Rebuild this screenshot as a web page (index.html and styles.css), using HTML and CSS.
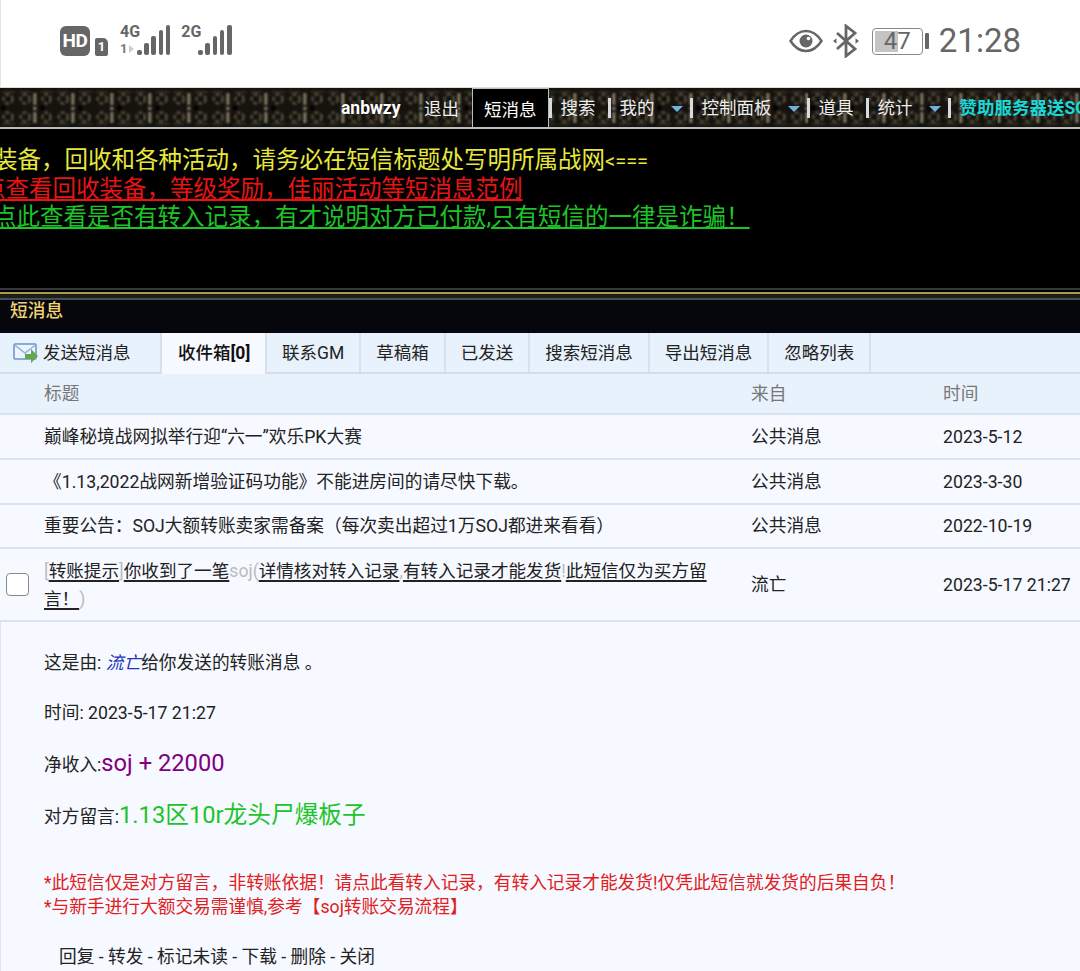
FILE: index.html
```html
<!DOCTYPE html>
<html lang="zh-CN">
<head>
    <meta charset="UTF-8">
    <meta name="viewport" content="width=device-width, initial-scale=1.0">
    <title>短消息</title>
    <link rel="stylesheet" href="styles.css">
</head>
<body>
    <div class="status-bar">
        <div class="status-left">
            <span class="hd-badge">HD</span>
            <span class="sim-badge">1</span>
            <div class="signal">
                <div class="net-label"><span>4G</span><span class="net-sub">1<i class="net-arrow"></i></span></div>
                <div class="bars"><i class="bar-1"></i><i class="bar-2"></i><i class="bar-3"></i><i class="bar-4"></i><i class="bar-5"></i></div>
            </div>
            <div class="signal">
                <div class="net-label"><span>2G</span></div>
                <div class="bars"><i class="bar-1"></i><i class="bar-2"></i><i class="bar-3"></i><i class="bar-4"></i><i class="bar-5"></i></div>
            </div>
        </div>
        <div class="status-right">
            <svg class="eye-icon" width="34" height="24" viewBox="0 0 34 24">
                <path d="M1.500 12C6 5 11 2 17 2s11 3 15.500 10C28 19 23 22 17 22S6 19 1.500 12z" fill="none" stroke="#666" stroke-width="2.500"/>
                <circle cx="17" cy="12" r="6.500" fill="#666"/>
                <circle cx="19.500" cy="9.500" r="1.800" fill="#fff"/>
            </svg>
            <svg class="bt-icon" width="26" height="34" viewBox="0 0 26 34">
                <path d="M4 9l18 16-9 7V2l9 7L4 25" fill="none" stroke="#666" stroke-width="2.800"/>
                <path d="M0 17l3.500-2.800v5.600zM26 17l-3.500-2.800v5.600z" fill="#666"/>
            </svg>
            <div class="battery">
                <div class="battery-body"><div class="battery-fill"></div><span class="battery-num">47</span></div>
                <div class="battery-cap"></div>
            </div>
            <span class="clock">21:28</span>
        </div>
    </div>

    <nav class="top-nav">
        <span class="nav-user">anbwzy</span>
        <span class="nav-item nav-logout">退出</span>
        <span class="nav-item nav-active">短消息</span>
        <span class="nav-item nav-sep">搜索</span>
        <span class="nav-item nav-sep">我的<i class="nav-caret"></i></span>
        <span class="nav-item nav-sep">控制面板<i class="nav-caret"></i></span>
        <span class="nav-item nav-sep">道具</span>
        <span class="nav-item nav-sep">统计<i class="nav-caret"></i></span>
        <span class="nav-item nav-sep nav-promo">赞助服务器送SOJ</span>
    </nav>

    <div class="notice">
        <p class="notice-yellow">装备，回收和各种活动，请务必在短信标题处写明所属战网<span class="arrow">&lt;===</span></p>
        <p class="notice-red">点查看回收装备，等级奖励，佳丽活动等短消息范例</p>
        <p class="notice-green">点此查看是否有转入记录，有才说明对方已付款,只有短信的一律是诈骗！</p>
    </div>

    <div class="gold-rule"></div>
    <div class="section-title">短消息</div>

    <div class="tabs">
        <div class="tab tab-send">
            <svg width="26" height="23" viewBox="0 0 26 23">
                <rect x="1" y="2" width="22" height="15" rx="1" fill="#eef4fc" stroke="#6f93c8" stroke-width="1.500"/>
                <path d="M1.500 3l10.500 8 10.500-8" fill="none" stroke="#8fb0dc" stroke-width="1.500"/>
                <path d="M12 12h6V7l7 7-7 7v-4h-6z" fill="#62a84e"/>
            </svg>
            发送短消息
        </div>
        <div class="tab tab-active">收件箱<b>[0]</b></div>
        <div class="tab">联系GM</div>
        <div class="tab">草稿箱</div>
        <div class="tab">已发送</div>
        <div class="tab">搜索短消息</div>
        <div class="tab">导出短消息</div>
        <div class="tab">忽略列表</div>
    </div>

    <div class="msg-row msg-head">
        <span class="col-title">标题</span>
        <span>来自</span>
        <span>时间</span>
    </div>
    <div class="msg-row">
        <span class="col-title">巅峰秘境战网拟举行迎“六一”欢乐PK大赛</span>
        <span>公共消息</span>
        <span>2023-5-12</span>
    </div>
    <div class="msg-row">
        <span class="col-title">《1.13,2022战网新增验证码功能》不能进房间的请尽快下载。</span>
        <span>公共消息</span>
        <span>2023-3-30</span>
    </div>
    <div class="msg-row msg-short">
        <span class="col-title">重要公告：SOJ大额转账卖家需备案（每次卖出超过1万SOJ都进来看看）</span>
        <span>公共消息</span>
        <span>2022-10-19</span>
    </div>
    <div class="msg-row msg-open">
        <span class="msg-check"></span>
        <span class="col-title"><span class="faint">[</span><u>转账提示</u><span class="faint">]</span><u>你收到了一笔</u><span class="faint">soj(</span><u>详情核对转入记录</u><span class="faint">,</span><u>有转入记录才能发货</u><span class="faint">!</span><u>此短信仅为买方留言！</u><span class="faint">)</span></span>
        <span>流亡</span>
        <span>2023-5-17 21:27</span>
    </div>

    <div class="msg-body">
        <p class="line-from">这是由: <a class="sender">流亡</a>给你发送的转账消息 。</p>
        <p class="line-time">时间: 2023-5-17 21:27</p>
        <p class="line-income">净收入:<span class="income">soj + 22000</span></p>
        <p class="line-note">对方留言:<span class="note">1.13区10r龙头尸爆板子</span></p>
        <p class="warn">*此短信仅是对方留言，非转账依据！请点此看转入记录，有转入记录才能发货!仅凭此短信就发货的后果自负！<br>*与新手进行大额交易需谨慎,参考【soj转账交易流程】</p>
        <p class="actions">回复 - 转发 - 标记未读 - 下载 - 删除 - 关闭</p>
    </div>
</body>
</html>
```

FILE: styles.css
```css
* {
    margin: 0;
    padding: 0;
    box-sizing: border-box;
}

html, body {
    height: 971px;
    overflow: hidden;
}

body {
    width: 1080px;
    font-family: 'Roboto', 'Noto Sans CJK SC', sans-serif;
    font-size: 17.700px;
    color: #222;
    background: #f6f9ff;
}

/* phone status bar */
.status-bar {
    height: 87px;
    background: #fff;
    border-left: 1px solid #e6e6e6;
    display: flex;
    justify-content: space-between;
    align-items: flex-start;
    padding: 24px 59px 0 59px;
    color: #666;
}

.status-left {
    display: flex;
    align-items: flex-start;
}

.hd-badge {
    width: 30px;
    height: 30px;
    margin-top: 2px;
    background: #666;
    border-radius: 6px;
    color: #fff;
    font: bold 19px/30px 'Roboto', sans-serif;
    letter-spacing: -0.5px;
    text-align: center;
}

.sim-badge {
    width: 13px;
    height: 18px;
    margin: 14px 0 0 5px;
    background: #666;
    border-radius: 2px 5px 2px 2px;
    color: #fff;
    font: bold 13px/18px 'Roboto', sans-serif;
    text-align: center;
}

.signal {
    display: flex;
    margin-left: 12px;
    align-items: flex-end;
    height: 31px;
}

.signal + .signal {
    margin-left: 11px;
}

.net-label {
    width: 17px;
    height: 31px;
    display: flex;
    flex-direction: column;
    justify-content: space-between;
    font: bold 16px/15px 'Liberation Sans Narrow', 'Roboto', sans-serif;
}

.net-sub {
    display: flex;
    align-items: center;
    font-size: 13px;
    line-height: 10px;
    margin-bottom: 1px;
    color: #777;
}

.net-arrow {
    width: 0;
    height: 0;
    margin-left: 2px;
    border-left: 5px solid #ccc;
    border-top: 4px solid transparent;
    border-bottom: 4px solid transparent;
}

.bars {
    display: flex;
    align-items: flex-end;
    gap: 2.700px;
}

.bars i {
    display: block;
    width: 4.500px;
    background: #666;
    border-radius: 2px;
}

.bar-1 { height: 5px; }
.bar-2 { height: 12px; }
.bar-3 { height: 19px; }
.bar-4 { height: 25px; }
.bar-5 { height: 30px; }

.status-right {
    display: flex;
    align-items: center;
    height: 34px;
}

.bt-icon {
    margin-left: 10px;
}

.battery {
    display: flex;
    align-items: center;
    margin-left: 13px;
}

.battery-body {
    position: relative;
    width: 51px;
    height: 27px;
    border: 1.500px solid #888;
    border-radius: 4px;
    padding: 2px;
}

.battery-fill {
    width: 23px;
    height: 100%;
    background: #c4c4c4;
}

.battery-num {
    position: absolute;
    top: 0;
    left: 0;
    right: 0;
    text-align: center;
    font: 24px/24px 'Roboto', sans-serif;
    color: #666;
}

.battery-cap {
    width: 4px;
    height: 16px;
    margin-left: 2px;
    background: #666;
    border-radius: 1px;
}

.clock {
    margin-left: 10px;
    font: 33px/38px 'Roboto', sans-serif;
    color: #666;
}

/* top nav with the stone texture */
.top-nav {
    height: 42px;
    display: flex;
    align-items: center;
    padding-left: 341px;
    font-size: 17.500px;
    white-space: nowrap;
    overflow: hidden;
    color: #eee;
    border-top: 1px solid #ddd;
    border-bottom: 2px solid #b9bcc0;
    background-color: #15130e;
    background-image: url("data:image/svg+xml,%3Csvg xmlns='http://www.w3.org/2000/svg' width='38.600' height='39'%3E%3Cdefs%3E%3Cfilter id='b'%3E%3CfeGaussianBlur stdDeviation='1'/%3E%3C/filter%3E%3C/defs%3E%3Cg filter='url(%23b)'%3E%3Cg fill='none' stroke='%2358503f' stroke-width='2.400' stroke-dasharray='4 2'%3E%3Ccircle cx='8' cy='10' r='4.500'/%3E%3Ccircle cx='8' cy='28' r='4.500'/%3E%3Ccircle cx='25' cy='10' r='4.500'/%3E%3Ccircle cx='25' cy='28' r='4.500'/%3E%3C/g%3E%3Cpath d='M2 3h13M2 35h13M19 3h11M19 35h11' stroke='%23332e23' stroke-width='2'/%3E%3Cpath d='M0 19l5-4v8z' fill='%23030302'/%3E%3Crect x='33' y='4' width='3' height='12' fill='%23857c66'/%3E%3Crect x='33' y='18' width='3' height='3' fill='%23948b74'/%3E%3Crect x='33' y='23' width='3' height='11' fill='%23857c66'/%3E%3C/g%3E%3C/svg%3E");
    background-position: 0 1px;
}

.nav-user {
    flex-shrink: 0;
    font-weight: bold;
    color: #fff;
    width: 83px;
}

.nav-item {
    display: block;
    flex-shrink: 0;
}

.nav-logout {
    width: 48px;
}

.nav-active {
    align-self: flex-end;
    height: 41px;
    margin-bottom: -2px;
    padding: 0 11px;
    line-height: 42px;
    background: #000;
    color: #fff;
    border: 1px solid #b9bcc0;
    border-bottom: none;
}

.nav-sep {
    padding-left: 9px;
    margin-right: 12px;
    border-left: 3px solid #d8dade;
    line-height: 20px;
    height: 20px;
}

.nav-caret {
    display: inline-block;
    width: 0;
    height: 0;
    margin: 0 -5px 2px 16px;
    border-left: 6px solid transparent;
    border-right: 6px solid transparent;
    border-top: 6px solid #6fb3dc;
}

.nav-promo {
    color: #19d8d8;
    font-weight: bold;
    margin-right: 0;
}

/* black notice block */
.notice {
    height: 159px;
    background: #000;
    padding-top: 17px;
    font-size: 23.500px;
    line-height: 28px;
    white-space: nowrap;
    overflow: hidden;
}

.notice-yellow {
    color: #e8e83a;
    margin-left: -6px;
}

.arrow {
    font-size: 20px;
}

.notice-red {
    color: #e81414;
    text-decoration: underline;
    margin-left: -18px;
}

.notice-green {
    color: #1cc428;
    text-decoration: underline;
    margin-left: -7px;
}

.gold-rule {
    height: 13px;
    background: linear-gradient(#34373e 0 2px, #000 2px 4px, #a89a4a 4px 6px, #1e1e18 6px 10px, #464d5a 10px 12px, #05070c 12px);
}

.section-title {
    height: 32px;
    background: #05070c;
    color: #f1d476;
    font-weight: 500;
    padding-left: 10px;
    line-height: 20px;
}

/* tabs */
.tabs {
    height: 41px;
    display: flex;
    font-size: 17.500px;
    background: #e8f2fc;
    border-bottom: 2px solid #d3deea;
}

.tab {
    height: 39px;
    padding: 0 15px;
    line-height: 41px;
    border-right: 2px solid #d6e1ec;
    white-space: nowrap;
}

.tab-send {
    display: flex;
    align-items: center;
    width: 162px;
    padding: 2px 15px 0 13px;
}

.tab-send svg {
    margin-right: 4px;
}

.tab-active {
    width: 105px;
    background: #f6f9ff;
    height: 41px;
    padding-left: 16px;
    font-weight: 500;
    color: #111;
}

/* message table */
.msg-row {
    display: grid;
    grid-template-columns: 751px 192px 1fr;
    align-items: center;
    height: 45px;
    line-height: 24px;
    border-bottom: 2px solid #d9e2ee;
    position: relative;
}

.msg-row .col-title {
    padding-left: 44px;
}

.msg-head {
    height: 41px;
    padding-top: 1px;
    background: #e8f2fc;
    color: #777;
}

.msg-short {
    height: 44px;
}

.msg-open {
    height: 73px;
}

.msg-open .col-title {
    padding-right: 40px;
    font-size: 17.600px;
    line-height: 28px;
}

.msg-open u {
    text-underline-offset: 3px;
    text-decoration-thickness: 1.500px;
}

.faint {
    color: #bbb;
}

.msg-check {
    position: absolute;
    left: 6px;
    top: 24px;
    width: 23px;
    height: 23px;
    background: #fff;
    border: 1.500px solid #888;
    border-radius: 4px;
}

/* opened message */
.msg-body {
    height: 350px;
    border-left: 1px solid #e2e6ec;
    padding: 29px 0 0 43px;
}

.line-from,
.line-time {
    line-height: 24px;
    margin-bottom: 26px;
}

.line-time {
    margin-bottom: 24px;
}

.line-income,
.line-note {
    margin-bottom: 22px;
    line-height: 28px;
}

.sender {
    color: #2233bb;
    font-style: italic;
}

.income {
    color: #800080;
    font-size: 23.700px;
}

.note {
    color: #1cc428;
    font-size: 23.700px;
}

.warn {
    margin-top: 40px;
    color: #e02020;
    line-height: 24px;
}

.actions {
    margin: 26px 0 0 15px;
    line-height: 24px;
}
```
